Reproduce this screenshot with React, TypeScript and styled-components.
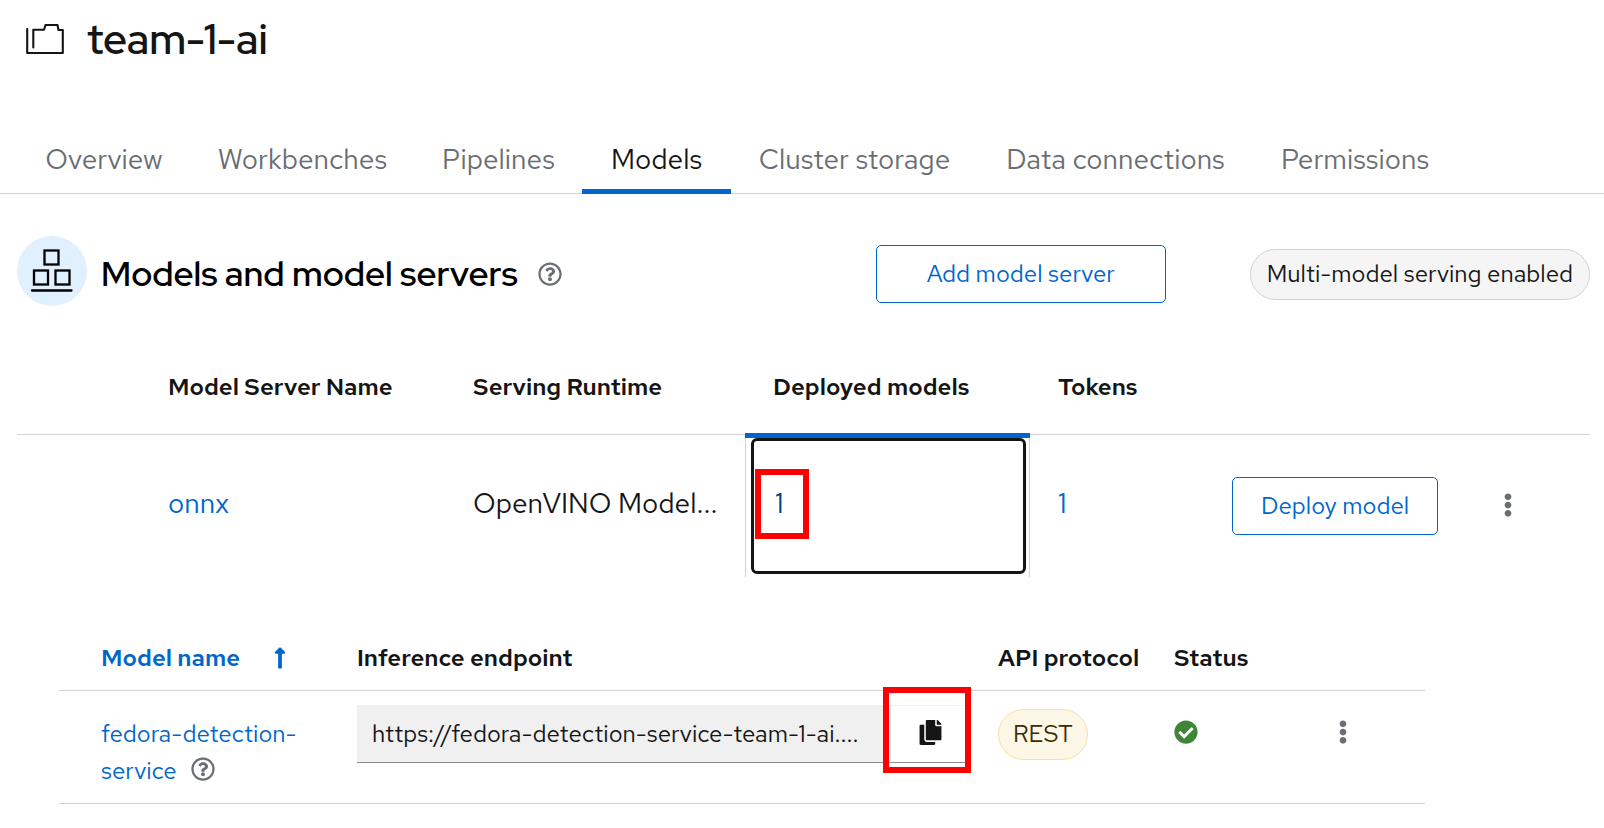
import React from "react";
import styled, { createGlobalStyle, css } from "styled-components";
import {
  FaCheckCircle,
  FaCopy,
  FaEllipsisV,
  FaLongArrowAltUp,
  FaRegQuestionCircle,
} from "react-icons/fa";

const color = {
  text: "#151515",
  muted: "#6a6e73",
  link: "#0066cc",
  linkActive: "#004080",
  line: "#d2d2d2",
  mark: "#ff0000",
};

const font = {
  text: `"Red Hat Text", Inter, "Liberation Sans", sans-serif`,
  display: `"Red Hat Display", "Red Hat Text", Inter, "Liberation Sans", sans-serif`,
};

const GlobalStyle = createGlobalStyle`
  *, *::before, *::after { box-sizing: border-box; }
  body {
    margin: 0;
    background: #fff;
    color: ${color.text};
    font-family: ${font.text};
    font-size: 24px;
    font-weight: 400;
    line-height: 32px;
  }
  button, input { font: inherit; color: inherit; }
  button { cursor: pointer; }
  a { color: ${color.link}; text-decoration: none; }
  svg { display: block; flex: none; }
`;

const PageHeader = styled.header`
  display: flex;
  align-items: center;
  gap: 23px;
  padding: 15px 26px 62px;
`;

const Title = styled.h1`
  margin: 0;
  font-family: ${font.display};
  font-size: 42px;
  font-weight: 600;
  line-height: 48px;
`;

const Tabs = styled.nav`
  display: flex;
  padding-left: 18px;
  box-shadow: inset 0 -1px ${color.line};
`;

const Tab = styled.a<{ $width: number; $current?: boolean }>`
  flex: 0 1 ${(p) => p.$width}px;
  padding: 18px 0 14px;
  border-bottom: 5px solid ${(p) => (p.$current ? color.link : "transparent")};
  color: ${(p) => (p.$current ? color.text : color.muted)};
  font-size: 28px;
  text-align: center;
  white-space: nowrap;
`;

const Main = styled.main`
  padding: 42px 14px 24px 17px;
`;

const Toolbar = styled.div`
  display: flex;
  align-items: center;
  min-height: 76px;
  margin-bottom: 26px;
`;

const SectionIcon = styled.span`
  align-self: flex-start;
  flex: none;
  width: 70px;
  height: 70px;
  margin-right: 14px;
  border-radius: 50%;
  background: #e0f0ff;
`;

const SectionTitle = styled.h2`
  margin: 0 20px 0 0;
  color: #000;
  font-family: ${font.display};
  font-size: 35px;
  font-weight: 600;
  line-height: 40px;
`;

const IconButton = styled.button`
  display: inline-flex;
  align-items: center;
  justify-content: center;
  padding: 0;
  border: 0;
  background: none;
  color: ${color.muted};
  font-size: 24px;
  vertical-align: middle;
`;

const ActionButton = styled.button<{ $wide?: boolean }>`
  height: 58px;
  padding: 0 ${(p) => (p.$wide ? 50 : 28)}px 1px;
  border: 1px solid ${color.link};
  border-radius: 5px;
  background: #fff;
  color: ${color.link};
  white-space: nowrap;
`;

const ToolbarAction = styled.div`
  margin: 0 84px 0 auto;
`;

const Pill = styled.span<{ $gold?: boolean }>`
  display: inline-flex;
  align-items: center;
  height: 51px;
  padding: 0 16px;
  border: 1px solid ${color.line};
  border-radius: 26px;
  background: #f5f5f5;
  white-space: nowrap;
  ${(p) =>
    p.$gold &&
    css`
      padding: 0 14px;
      border-color: #f9e0a2;
      background: #fdf7e7;
      color: #3d2c00;
    `}
`;

const Table = styled.table`
  width: 100%;
  table-layout: fixed;
  border-collapse: separate;
  border-spacing: 0;
  text-align: left;

  th { font-weight: 600; }
`;

const ServerTable = styled(Table)`
  thead > tr > * {
    padding: 33px 0 31px 28px;
    border-bottom: 1px solid ${color.line};
    white-space: nowrap;
  }
`;

const ModelTableArea = styled.div`
  margin: 47px 165px 0 42px;
`;

const ModelTable = styled(Table)`
  th, td {
    padding: 14px;
    border-bottom: 1px solid ${color.line};
    vertical-align: top;
  }
  th, thead td {
    padding: 18px 0 16px 14px;
    white-space: nowrap;
  }
  tr > :first-child { padding-left: 42px; }
`;

const Col = styled.col<{ $share: number; $of: number }>`
  width: ${(p) => (p.$share / p.$of) * 100}%;
`;

const ServerCell = styled.td`
  height: 142px;
  padding: 0 0 7px 28px;
  font-size: 28px;
  white-space: nowrap;
  vertical-align: middle;
`;

const ActionCell = styled.td<{ $icon?: boolean }>`
  padding: 0 0 ${(p) => (p.$icon ? 7 : 0)}px 28px;
  vertical-align: middle;
`;

const ExpandedCell = styled.td`
  position: relative;
  padding: 0;
  border: solid ${color.line};
  border-width: 0 1px;

  &::before {
    content: "";
    position: absolute;
    top: -2px;
    left: -1px;
    right: -1px;
    height: 5px;
    background: ${color.link};
  }
`;

const CompoundToggle = styled.button`
  display: flex;
  align-items: center;
  width: calc(100% - 8px);
  height: 136px;
  margin: 3px 3px 3px 5px;
  padding: 0 20px 7px 21px;
  border: 3px solid ${color.text};
  border-radius: 6px;
  background: none;
  color: ${color.linkActive};
  font-size: 28px;
`;

const Marked = styled.span<{ $x: number; $y: number; $w: number; $h: number }>`
  position: relative;
  display: inline-flex;

  &::after {
    content: "";
    position: absolute;
    top: ${(p) => p.$y}px;
    left: ${(p) => p.$x}px;
    width: ${(p) => p.$w}px;
    height: ${(p) => p.$h}px;
    border: 6px solid ${color.mark};
    pointer-events: none;
  }
`;

const SortButton = styled.button`
  display: inline-flex;
  align-items: center;
  gap: 28px;
  padding: 0;
  border: 0;
  background: none;
  color: ${color.link};
`;

const ModelName = styled.div`
  padding-top: 10px;
  line-height: 37px;
`;

const InlineHelp = styled(IconButton)`
  margin-left: 14px;
  vertical-align: -2px;
`;

const CellLine = styled.div<{ $icon?: boolean }>`
  display: flex;
  align-items: center;
  height: ${(p) => (p.$icon ? 54 : 58)}px;
`;

const EndpointInput = styled.input`
  flex: 1;
  min-width: 0;
  height: 58px;
  padding: 0 15px;
  border: 0;
  border-bottom: 1px solid #8a8d90;
  border-radius: 0;
  background: #f0f0f0;
  text-overflow: ellipsis;
`;

const CopyButton = styled(IconButton)`
  width: 80px;
  height: 58px;
  padding-bottom: 4px;
  border: 1px solid #f0f0f0;
  border-bottom-color: #8a8d90;
  color: ${color.text};
  font-size: 25px;
`;

const Success = styled.span`
  color: #3e8635;
`;

const ProjectIcon = () => (
  <svg width="38" height="32" viewBox="0 0 38 32" fill="none" stroke="#151515" strokeWidth="2.1" strokeLinecap="round" strokeLinejoin="round" aria-hidden="true">
    <path d="M1.200 6v24h35.600V7h-4.300l-1-5h-12l-1.500 4.800H7.300V24.500" />
  </svg>
);

const ModelsIcon = () => (
  <svg width="70" height="70" viewBox="0 0 70 70" fill="none" stroke="#000" strokeWidth="2.3" strokeLinecap="round" aria-hidden="true">
    <rect x="27.500" y="14.500" width="14" height="14" />
    <rect x="17" y="34.500" width="14" height="14" />
    <rect x="38.500" y="34.500" width="14" height="14" />
    <path d="M15 54.500h39.500" />
  </svg>
);

const tabs = [
  { label: "Overview", width: 172 },
  { label: "Workbenches", width: 225 },
  { label: "Pipelines", width: 167 },
  { label: "Models", width: 149 },
  { label: "Cluster storage", width: 247 },
  { label: "Data connections", width: 275 },
  { label: "Permissions", width: 204 },
];

const serverColumns = [123, 305, 300, 285, 174, 264, 122];
const modelColumns = [284, 641, 176, 157, 108];

const Columns = ({ shares }: { shares: number[] }) => {
  const total = shares.reduce((sum, share) => sum + share, 0);
  return (
    <colgroup>
      {shares.map((share, i) => (
        <Col key={i} $share={share} $of={total} />
      ))}
    </colgroup>
  );
};

export default function App() {
  return (
    <>
      <GlobalStyle />
      <PageHeader>
        <ProjectIcon />
        <Title>team-1-ai</Title>
      </PageHeader>

      <Tabs aria-label="Project sections">
        {tabs.map(({ label, width }) => (
          <Tab
            key={label}
            href="#"
            $width={width}
            $current={label === "Models"}
            aria-current={label === "Models" ? "page" : undefined}
          >
            {label}
          </Tab>
        ))}
      </Tabs>

      <Main>
        <Toolbar>
          <SectionIcon>
            <ModelsIcon />
          </SectionIcon>
          <SectionTitle>Models and model servers</SectionTitle>
          <IconButton type="button" aria-label="About model servers">
            <FaRegQuestionCircle />
          </IconButton>
          <ToolbarAction>
            <ActionButton type="button" $wide>
              Add model server
            </ActionButton>
          </ToolbarAction>
          <Pill>Multi-model serving enabled</Pill>
        </Toolbar>

        <ServerTable aria-label="Model servers">
          <Columns shares={serverColumns} />
          <thead>
            <tr>
              <td />
              <th scope="col">Model Server Name</th>
              <th scope="col">Serving Runtime</th>
              <th scope="col">Deployed models</th>
              <th scope="col">Tokens</th>
              <td />
              <td />
            </tr>
          </thead>
          <tbody>
            <tr>
              <td />
              <ServerCell>
                <a href="#">onnx</a>
              </ServerCell>
              <ServerCell>OpenVINO Model...</ServerCell>
              <ExpandedCell>
                <CompoundToggle type="button" aria-expanded="true">
                  <Marked $x={-20} $y={-18} $w={54} $h={70}>1</Marked>
                </CompoundToggle>
              </ExpandedCell>
              <ServerCell>
                <a href="#">1</a>
              </ServerCell>
              <ActionCell>
                <ActionButton type="button">Deploy model</ActionButton>
              </ActionCell>
              <ActionCell $icon>
                <IconButton type="button" aria-label="Model server actions">
                  <FaEllipsisV />
                </IconButton>
              </ActionCell>
            </tr>
          </tbody>
        </ServerTable>

        <ModelTableArea>
          <ModelTable aria-label="Deployed models">
            <Columns shares={modelColumns} />
            <thead>
              <tr>
                <th scope="col" aria-sort="ascending">
                  <SortButton type="button">
                    Model name
                    <FaLongArrowAltUp />
                  </SortButton>
                </th>
                <th scope="col">Inference endpoint</th>
                <th scope="col">API protocol</th>
                <th scope="col">Status</th>
                <td />
              </tr>
            </thead>
            <tbody>
              <tr>
                <td>
                  <ModelName>
                    <a href="#">fedora-detection-service</a>
                    <InlineHelp type="button" aria-label="Model details">
                      <FaRegQuestionCircle />
                    </InlineHelp>
                  </ModelName>
                </td>
                <td>
                  <CellLine>
                    <EndpointInput
                      aria-label="Inference endpoint"
                      readOnly
                      value="https://fedora-detection-service-team-1-ai...."
                    />
                    <Marked $x={-7} $y={-18} $w={88} $h={86}>
                      <CopyButton type="button" aria-label="Copy endpoint">
                        <FaCopy />
                      </CopyButton>
                    </Marked>
                  </CellLine>
                </td>
                <td>
                  <CellLine>
                    <Pill $gold>REST</Pill>
                  </CellLine>
                </td>
                <td>
                  <CellLine $icon>
                    <Success role="img" aria-label="Available">
                      <FaCheckCircle />
                    </Success>
                  </CellLine>
                </td>
                <td>
                  <CellLine $icon>
                    <IconButton type="button" aria-label="Model actions">
                      <FaEllipsisV />
                    </IconButton>
                  </CellLine>
                </td>
              </tr>
            </tbody>
          </ModelTable>
        </ModelTableArea>
      </Main>
    </>
  );
}
